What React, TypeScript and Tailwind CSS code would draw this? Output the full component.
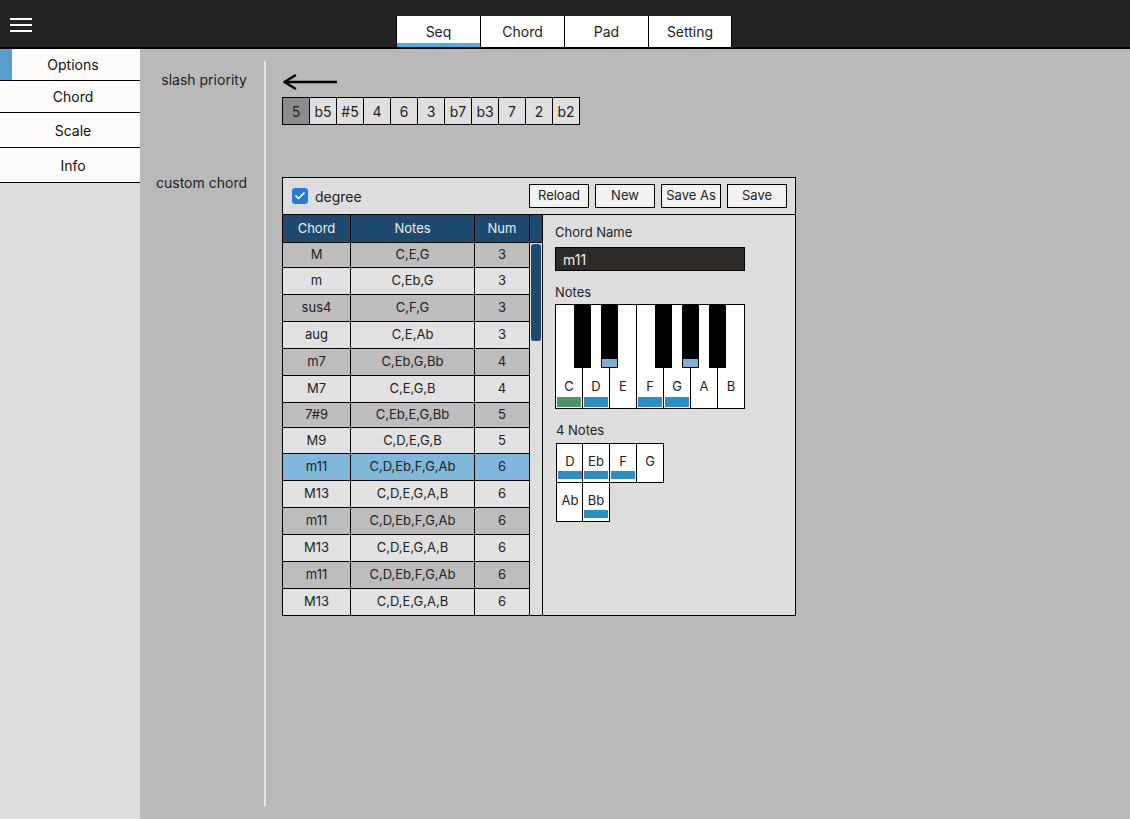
import { Check } from "lucide-react";

interface ChordRow { name: string; notes: string; num: number; h: string; }

const rows: ChordRow[] = [
  { name: "M", notes: "C,E,G", num: 3, h: "h-[25px]" },
  { name: "m", notes: "C,Eb,G", num: 3, h: "h-[27px]" },
  { name: "sus4", notes: "C,F,G", num: 3, h: "h-[27px]" },
  { name: "aug", notes: "C,E,Ab", num: 3, h: "h-[27px]" },
  { name: "m7", notes: "C,Eb,G,Bb", num: 4, h: "h-[27px]" },
  { name: "M7", notes: "C,E,G,B", num: 4, h: "h-[27px]" },
  { name: "7#9", notes: "C,Eb,E,G,Bb", num: 5, h: "h-[25px]" },
  { name: "M9", notes: "C,D,E,G,B", num: 5, h: "h-[26px]" },
  { name: "m11", notes: "C,D,Eb,F,G,Ab", num: 6, h: "h-[27px]" },
  { name: "M13", notes: "C,D,E,G,A,B", num: 6, h: "h-[27px]" },
  { name: "m11", notes: "C,D,Eb,F,G,Ab", num: 6, h: "h-[27px]" },
  { name: "M13", notes: "C,D,E,G,A,B", num: 6, h: "h-[27px]" },
  { name: "m11", notes: "C,D,Eb,F,G,Ab", num: 6, h: "h-[27px]" },
  { name: "M13", notes: "C,D,E,G,A,B", num: 6, h: "h-[26px]" },
];

const SELECTED = 8;
const slash = ["5", "b5", "#5", "4", "6", "3", "b7", "b3", "7", "2", "b2"];
const tabs = ["Seq", "Chord", "Pad", "Setting"];
const side = [
  { label: "Options", h: "h-[32px]" },
  { label: "Chord", h: "h-[32px]" },
  { label: "Scale", h: "h-[35px]" },
  { label: "Info", h: "h-[35px]" },
];

// white keys: bar colour (none / green root / blue)
const whiteKeys: { note: string; bar?: string }[] = [
  { note: "C", bar: "bg-[#4a9466]" },
  { note: "D", bar: "bg-[#2b8fc6]" },
  { note: "E" },
  { note: "F", bar: "bg-[#2b8fc6]" },
  { note: "G", bar: "bg-[#2b8fc6]" },
  { note: "A" },
  { note: "B" },
];
const blackKeys = [
  { pos: "left-[18px]", on: false },
  { pos: "left-[45px]", on: true },
  { pos: "left-[99px]", on: false },
  { pos: "left-[126px]", on: true },
  { pos: "left-[153px]", on: false },
];
const fourNotes = [
  { note: "D", on: true },
  { note: "Eb", on: true },
  { note: "F", on: true },
  { note: "G", on: false },
  { note: "Ab", on: false },
  { note: "Bb", on: true },
];

export default function App() {
  return (
    <div className="w-[1130px] h-[819px] flex flex-col overflow-hidden text-[#222] font-['Inter','Liberation_Sans',sans-serif]">
      {/* Header */}
      <div className="h-[49px] shrink-0 bg-[#222222] border-b-2 border-black flex">
        <div className="w-[22px] ml-[10px] mt-[18px] flex flex-col gap-[4px]">
          <div className="h-[2px] bg-white" />
          <div className="h-[2px] bg-white" />
          <div className="h-[2px] bg-white" />
        </div>
        <div className="ml-[364px] mt-[16px] flex h-[31px]">
          {tabs.map((t, i) => (
            <div key={t}
              className={`relative w-[84px] h-full bg-white border-l border-black flex items-center justify-center text-[14px] text-[#222] ${i === tabs.length - 1 ? "border-r" : ""}`}>
              {t}
              {i === 0 && <div className="absolute left-0 right-0 bottom-0 h-[4px] bg-[#3db4e5]" />}
            </div>
          ))}
        </div>
      </div>

      <div className="flex flex-1">
        {/* Sidebar */}
        <div className="w-[140px] bg-[#dddddd] flex flex-col">
          {side.map((s, i) => (
            <div key={s.label} className={`${s.h} bg-[#fdfcfa] border-b border-black flex text-[14px] text-[#111]`}>
              {i === 0 && <div className="w-[12px] bg-[#5a9fcb]" />}
              <div className={`flex-1 flex items-center justify-center ${i === 0 ? "pr-[6px]" : "pl-[6px]"}`}>
                {s.label}
              </div>
            </div>
          ))}
        </div>

        {/* Main */}
        <div className="flex-1 bg-[#b9b9b9] flex pt-[12px] pb-[13px]">
          <div className="w-[124px] flex flex-col items-end pr-[17px] text-[14px] text-[#222]">
            <div className="mt-[9px] leading-[20px]">slash priority</div>
            <div className="mt-[83px] leading-[20px]">custom chord</div>
          </div>

          <div className="border-l-2 border-[#e6e6e6] pl-[16px] flex flex-col">
            <svg className="mt-[13px]" width="56" height="16" viewBox="0 0 56 16">
              <path d="M2 8 H55" stroke="black" strokeWidth="2.5" fill="none" />
              <path d="M13 1.5 L2.5 8 L13 14.5" stroke="black" strokeWidth="2.5" fill="none" strokeLinecap="round" strokeLinejoin="round" />
            </svg>
            <div className="flex mt-[7px]">
              {slash.map((s, i) => (
                <div key={s}
                  className={`w-[28px] h-[28px] border border-black flex items-center justify-center text-[14px] ${i === 0 ? "bg-[#8c8c8c]" : "-ml-px bg-[#e0e0e0]"}`}>
                  {s}
                </div>
              ))}
            </div>

            {/* Custom chord panel */}
            <div className="mt-[52px] w-[514px] h-[439px] border border-black bg-[#dedede] flex flex-col">
              <div className="h-[37px] shrink-0 border-b border-black flex items-center pl-[9px] pr-[8px]">
                <div className="w-[16px] h-[16px] rounded-[3px] bg-[#2a7ad5] flex items-center justify-center">
                  <Check size={12} strokeWidth={3.5} color="white" />
                </div>
                <span className="ml-[7px] text-[14px]">degree</span>
                <div className="ml-auto flex gap-[6px]">
                  {["Reload", "New", "Save As", "Save"].map(b => (
                    <div key={b} className="w-[60px] h-[24px] bg-[#f2f2f2] border border-black flex items-center justify-center text-[13px]">{b}</div>
                  ))}
                </div>
              </div>

              <div className="flex flex-1">
                {/* Table */}
                <div className="w-[260px] flex flex-col text-[13px]">
                  <div className="h-[28px] shrink-0 flex bg-[#1f4a70] text-[#eeeeee] border-b border-black">
                    <div className="w-[68px] border-r border-black flex items-center justify-center">Chord</div>
                    <div className="w-[124px] border-r border-black flex items-center justify-center">Notes</div>
                    <div className="w-[55px] border-r border-black flex items-center justify-center">Num</div>
                    <div className="w-[13px] border-r border-black" />
                  </div>
                  <div className="flex flex-1">
                    <div className="w-[247px] flex flex-col">
                      {rows.map((r, i) => {
                        const bg = i === SELECTED ? "bg-[#80b8dc]" : i % 2 === 0 ? "bg-[#bdbdbd]" : "bg-[#e2e2e2]";
                        return (
                          <div key={i} className={`${r.h} shrink-0 flex ${bg} ${i < rows.length - 1 ? "border-b border-black" : ""}`}>
                            <div className="w-[68px] border-r border-black flex items-center justify-center">{r.name}</div>
                            <div className="w-[124px] border-r border-black flex items-center justify-center">{r.notes}</div>
                            <div className="w-[55px] border-r border-black flex items-center justify-center">{r.num}</div>
                          </div>
                        );
                      })}
                    </div>
                    <div className="w-[13px] border-r border-black bg-[#dedede] pt-px">
                      <div className="mx-px w-[10px] h-[97px] rounded-[3px] bg-[#1f4a70]" />
                    </div>
                  </div>
                </div>

                {/* Editor */}
                <div className="flex-1 pl-[12px] pt-[9px] flex flex-col text-[13px]">
                  <div className="leading-[16px]">Chord Name</div>
                  <div className="mt-[7px] w-[190px] h-[24px] bg-[#2e2a27] border border-black text-[#eeeeee] text-[14px] pl-[7px] flex items-center">m11</div>
                  <div className="mt-[13px] leading-[16px]">Notes</div>
                  <div className="mt-[4px] relative w-[190px] h-[105px] border border-black bg-white flex">
                    {whiteKeys.map((k, i) => (
                      <div key={k.note}
                        className={`${i < 6 ? "w-[27px] border-r border-black" : "w-[26px]"} h-full flex flex-col justify-end items-stretch pb-px`}>
                        <div className="text-center text-[13px] leading-[14px] mb-[4px]">{k.note}</div>
                        <div className={`mx-px h-[10px] ${k.bar ?? ""}`} />
                      </div>
                    ))}
                    {blackKeys.map((b, i) => (
                      <div key={i} className={`absolute top-0 ${b.pos} w-[17px] h-[63px] bg-black flex flex-col justify-end items-center pb-px`}>
                        {b.on && <div className="w-[15px] h-[8px] bg-[#7ab0d8]" />}
                      </div>
                    ))}
                  </div>
                  <div className="mt-[13px] ml-px leading-[16px]">4 Notes</div>
                  <div className="mt-[5px] ml-px grid grid-cols-[repeat(4,27px)] w-[109px]">
                    {fourNotes.map((n, i) => (
                      <div key={i} className={`w-[28px] h-[40px] border border-black bg-white flex flex-col items-stretch ${i % 4 !== 0 ? "-ml-px" : ""} ${i >= 4 ? "-mt-px" : ""}`}>
                        <div className="mt-[9px] text-center text-[13px] leading-[16px]">{n.note}</div>
                        <div className={`mt-[2px] mx-[1px] h-[8px] ${n.on ? "bg-[#2b8fc6]" : ""}`} />
                      </div>
                    ))}
                  </div>
                </div>
              </div>
            </div>
          </div>
        </div>
      </div>
    </div>
  );
}
